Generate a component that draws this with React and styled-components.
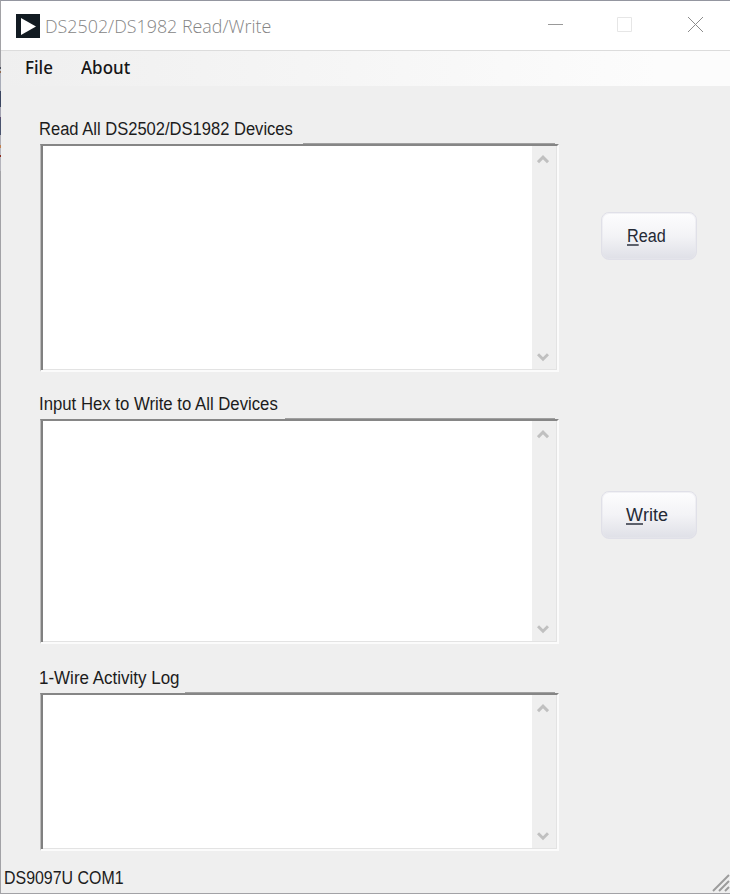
import React from "react";
import styled, { createGlobalStyle } from "styled-components";

const GlobalStyle = createGlobalStyle`
  * { box-sizing: border-box; }
  body { margin: 0; background: #efefef; overflow: hidden; }
`;

const Window = styled.div`
  position: relative;
  width: 730px;
  height: 894px;
  display: flex;
  flex-direction: column;
  background: #efefef;
  border: 1px solid #a2a2a6;
  border-top-color: #9496a0;
  border-right: 0;
  color: #1c1c1c;
  font: 18px/22px "Liberation Sans", Arial, sans-serif;
`;

/* Sliver of the desktop visible along the window's left edge */
const DesktopEdge = styled.div`
  position: absolute;
  left: -1px;
  top: 64px;
  width: 1px;
  height: 106px;
  background: linear-gradient(
    #a2a2a6 0 2px, #4a4e5c 2px 4px, #b8bcc4 4px 6px, #8f6a50 6px 8px, #a8acb8 8px 26px,
    #3a4560 26px 42px, #a2a2b0 42px 52px, #5a4a70 52px 54px, #49536e 54px 70px,
    #b0b0b8 70px 80px, #c08050 80px 83px, #b8b8c0 83px 90px, #8c2a1c 90px 92px, #b4b4bc 92px
  );
`;

const TitleBar = styled.header`
  height: 50px;
  flex: none;
  display: flex;
  align-items: center;
  padding-left: 15px;
  background: #fff;
  border-bottom: 1px solid #dcdcdc;
`;

const AppIcon = styled.svg`
  width: 24px;
  height: 24px;
  flex: none;
  margin-right: 5px;
`;

const Fitted = styled.span`
  display: inline-block;
  white-space: pre;
  transform: scaleX(${(p) => p.$x || 1});
  transform-origin: left center;
`;

const Title = styled(Fitted)`
  flex: 1;
  color: #858585;
  font: 300 18px/24px "Open Sans", sans-serif;
`;

const Controls = styled.div`
  width: 182px;
  flex: none;
  display: flex;
  gap: 53px;
  margin-bottom: 3px;
  svg { display: block; width: 16px; height: 16px; }
  svg:last-child { margin-left: 2px; }
`;

const MenuBar = styled.nav`
  height: 35px;
  flex: none;
  display: flex;
  padding: 4px 0 0 24px;
  background: linear-gradient(90deg, #efefef, #fcfcfc 90%);
`;

const MenuItem = styled.span`
  width: 56px;
  color: #161616;
  font: 500 17.5px/24px "Noto Sans", sans-serif;
`;

const Body = styled.main`
  flex: 1;
  display: grid;
  grid-template-columns: 519px 1fr;
  grid-template-rows: 254px 271px 208px;
  padding: 32px 33px 0 38px;
`;

const Panel = styled.section`
  display: flex;
  flex-direction: column;
  padding-top: ${(p) => p.$top || 0}px;
`;

const Label = styled.label`
  height: 22px;
  display: block;
`;

const Ridge = styled.div`
  height: 1px;
  flex: none;
  margin: 3px 3px 0 ${(p) => p.$from}px;
  background: #a0a0a0;
`;

const Field = styled.div`
  height: ${(p) => p.$h}px;
  flex: none;
  margin-left: 1px;
  width: 519px;
  display: flex;
  justify-content: flex-end;
  background: #fff;
  border: solid;
  border-width: 2px 2px 2px 1px;
  border-color: #868686 #fbfbfb #fbfbfb #bcbcbc;
  box-shadow: inset 2px 0 0 #808080, inset -1px -1px 0 #e3e3e3;
`;

const ScrollBar = styled.div`
  width: 25px;
  margin-bottom: 1px;
  display: flex;
  flex-direction: column;
  justify-content: space-between;
  align-items: center;
  padding: 8px 2px 6px 0;
  background: #efefef;
  border-right: 1px solid #e3e3e3;
  svg { display: block; width: 12px; height: 11px; }
`;

const ActionCell = styled.div`
  display: flex;
  justify-content: flex-end;
  align-items: flex-start;
  padding-top: ${(p) => p.$top}px;
`;

const ActionButton = styled.button`
  width: 96px;
  height: 48px;
  padding: 0 0 1px ${(p) => p.$inset}px;
  text-align: left;
  border: 1px solid #e0e0e8;
  border-radius: 8px;
  color: #242a36;
  background: linear-gradient(#fdfdfe, #f3f3f6 50%, #dfe0e7);
  box-shadow: inset 0 0 0 1px #e6e6ec88;
  font: 18px/22px "Liberation Sans", Arial, sans-serif;
`;

const Key = styled.span`
  display: inline-block;
  height: 21px;
  border-bottom: 2px solid #5c606b;
`;

const StatusBar = styled.footer`
  height: 30px;
  flex: none;
  display: flex;
  justify-content: space-between;
  align-items: flex-start;
  padding: 4px 0 0 3px;
`;

const Grip = styled.svg`
  width: 18px;
  height: 18px;
  margin-top: 7px;
`;

const Chevron = ({ down }) => (
  <svg viewBox="0 0 12 11">
    <path
      d={down ? "M1 2.2 6 7.2 11 2.2" : "M1 8.2 6 3.2 11 8.2"}
      fill="none"
      stroke="#c0c0c0"
      strokeWidth="3"
    />
  </svg>
);

const TextPanel = ({ label, scale, top, ridge, height }) => (
  <Panel $top={top}>
    <Label><Fitted $x={scale}>{label}</Fitted></Label>
    <Ridge $from={ridge} />
    <Field $h={height}>
      <ScrollBar>
        <Chevron />
        <Chevron down />
      </ScrollBar>
    </Field>
  </Panel>
);

export default function App() {
  return (
    <Window>
      <GlobalStyle />
      <DesktopEdge />
      <TitleBar>
        <AppIcon viewBox="0 0 24 24">
          <path fill="#121b22" d="M0 0h24v24H0z" />
          <path fill="#fff" d="M5 4v17l15-8.5z" />
        </AppIcon>
        <Title $x={0.992}>DS2502/DS1982 Read/Write</Title>
        <Controls>
          <svg viewBox="0 0 16 16"><path d="M0 8.5h15" stroke="#999" /></svg>
          <svg viewBox="0 0 16 16"><path d="M.5 1.5h14v14H.5z" fill="none" stroke="#e6e6e6" /></svg>
          <svg viewBox="0 0 16 16"><path d="M0 1l15 15M15 1l-15 15" stroke="#8c8c8c" /></svg>
        </Controls>
      </TitleBar>
      <MenuBar>
        <MenuItem><Fitted $x={0.97}>File</Fitted></MenuItem>
        <MenuItem><Fitted $x={0.97}>About</Fitted></MenuItem>
      </MenuBar>
      <Body>
        <TextPanel label="Read All DS2502/DS1982 Devices" scale={0.919} ridge={264} height={228} />
        <ActionCell $top={94}>
          <ActionButton $inset={25}><Fitted $x={0.9}><Key>R</Key>ead</Fitted></ActionButton>
        </ActionCell>
        <TextPanel label="Input Hex to Write to All Devices" scale={0.93} top={21} ridge={246} height={225} />
        <ActionCell $top={119}>
          <ActionButton $inset={24}><Fitted $x={1}><Key>W</Key>rite</Fitted></ActionButton>
        </ActionCell>
        <TextPanel label="1-Wire Activity Log" scale={0.943} top={24} ridge={146} height={158} />
      </Body>
      <StatusBar>
        <Fitted $x={0.885}>DS9097U COM1</Fitted>
        <Grip viewBox="0 0 18 18">
          <path d="M1 17 17 1M7 17 17 7M13 17l4-4" stroke="#9c9c9c" strokeWidth="2" />
        </Grip>
      </StatusBar>
    </Window>
  );
}
